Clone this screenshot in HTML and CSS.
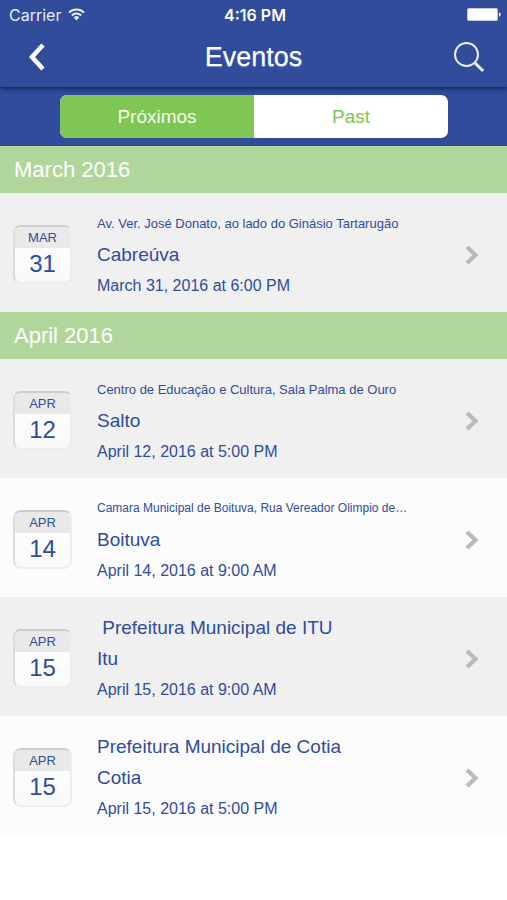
FILE: index.html
```html
<!DOCTYPE html>
<html lang="pt">
<head>
<meta charset="utf-8">
<meta name="viewport" content="width=device-width, initial-scale=1">
<title>Eventos</title>
<link rel="stylesheet" href="styles.css">
</head>
<body>
<svg width="0" height="0" class="defs" aria-hidden="true">
  <symbol id="chevron" viewBox="0 0 14 20"><path d="M2 2l8.500 8L2 18" fill="none" stroke="currentColor" stroke-width="4.200"/></symbol>
</svg>
<header class="top">
  <div class="status">
    <div class="carrier">
      <span>Carrier</span>
      <svg width="17" height="13" viewBox="0 0 17 13" aria-hidden="true">
        <g fill="none" stroke="currentColor" stroke-width="2"><path d="M1 4.600a10.800 10.800 0 0 1 15 0"/><path d="M3.800 7.500a6.800 6.800 0 0 1 9.400 0"/></g>
        <path d="M5.700 9.400a4 4 0 0 1 5.600 0L8.500 12.400z" fill="currentColor"/>
      </svg>
    </div>
    <span class="clock">4:16 PM</span>
    <svg class="battery" width="34" height="13" viewBox="0 0 34 13" aria-hidden="true">
      <rect width="31" height="13" rx="2" fill="#fff" opacity=".7"/><rect x="1" y="1" width="29" height="11" rx="1" fill="#fff"/><path d="M32 4.500c2.300.5 2.300 3.500 0 4z" fill="#fff"/>
    </svg>
  </div>
  <nav class="bar">
    <button class="icon back" type="button" aria-label="Back">
      <svg width="18" height="28" viewBox="0 0 18 28"><path d="M15 2L4 14l11 12" fill="none" stroke="currentColor" stroke-width="4.500"/></svg>
    </button>
    <h1>Eventos</h1>
    <button class="icon search" type="button" aria-label="Search">
      <svg width="32" height="32" viewBox="0 0 32 32" fill="none" stroke="currentColor"><circle cx="13.500" cy="13.500" r="11.500" stroke-width="2"/><path d="M21.700 21.700l8.500 8.300" stroke-width="3"/></svg>
    </button>
  </nav>
</header>
<main>
  <div class="tabs">
    <div class="segment">
      <button type="button" class="active" aria-pressed="true">Próximos</button>
      <button type="button" aria-pressed="false">Past</button>
    </div>
  </div>
  <section>
    <h2>March 2016</h2>
    <ul>
      <li><a class="event" href="#">
        <span class="cal"><span class="month">MAR</span><span class="day">31</span></span>
        <span class="info"><span class="place small">Av. Ver. José Donato, ao lado do Ginásio Tartarugão</span><span class="city">Cabreúva</span><span class="time">March 31, 2016 at 6:00 PM</span></span>
        <svg class="go" width="14" height="20" aria-hidden="true"><use href="#chevron"/></svg>
      </a></li>
    </ul>
  </section>
  <section>
    <h2>April 2016</h2>
    <ul>
      <li><a class="event" href="#">
        <span class="cal"><span class="month">APR</span><span class="day">12</span></span>
        <span class="info"><span class="place small">Centro de Educação e Cultura, Sala Palma de Ouro</span><span class="city">Salto</span><span class="time">April 12, 2016 at 5:00 PM</span></span>
        <svg class="go" width="14" height="20" aria-hidden="true"><use href="#chevron"/></svg>
      </a></li>
      <li><a class="event" href="#">
        <span class="cal"><span class="month">APR</span><span class="day">14</span></span>
        <span class="info"><span class="place tiny">Camara Municipal de Boituva, Rua Vereador Olimpio de…</span><span class="city">Boituva</span><span class="time">April 14, 2016 at 9:00 AM</span></span>
        <svg class="go" width="14" height="20" aria-hidden="true"><use href="#chevron"/></svg>
      </a></li>
      <li><a class="event" href="#">
        <span class="cal"><span class="month">APR</span><span class="day">15</span></span>
        <span class="info"><span class="place">&nbsp;Prefeitura Municipal de ITU</span><span class="city">Itu</span><span class="time">April 15, 2016 at 9:00 AM</span></span>
        <svg class="go" width="14" height="20" aria-hidden="true"><use href="#chevron"/></svg>
      </a></li>
      <li><a class="event" href="#">
        <span class="cal"><span class="month">APR</span><span class="day">15</span></span>
        <span class="info"><span class="place">Prefeitura Municipal de Cotia</span><span class="city">Cotia</span><span class="time">April 15, 2016 at 5:00 PM</span></span>
        <svg class="go" width="14" height="20" aria-hidden="true"><use href="#chevron"/></svg>
      </a></li>
    </ul>
  </section>
</main>
</body>
</html>
```
FILE: styles.css
```css
* { box-sizing: border-box; }
body { margin: 0; background: #fff; color: #304c9c; font-family: "Liberation Sans", Arial, sans-serif; }
button { border: 0; padding: 0; background: none; color: inherit; font: inherit; cursor: pointer; }
svg { display: block; }
.defs { position: absolute; }

.top { position: relative; background: #304c9b; color: #fff; box-shadow: 0 1px 5px rgba(0, 0, 20, .7); }
.status {
  display: grid; grid-template-columns: 1fr auto 1fr; align-items: center;
  height: 29px; padding: 0 6px 0 9px;
  font-family: Inter, sans-serif; font-size: 16px;
}
.carrier { display: flex; align-items: center; gap: 7px; color: #e6ebfa; }
.clock { font-weight: 600; }
.battery { justify-self: end; }
.bar { display: grid; grid-template-columns: 1fr auto 1fr; align-items: center; height: 58px; padding: 0 22px 3px 28px; }
.icon { display: flex; }
.back { justify-self: start; }
.search { justify-self: end; color: #e9eefb; }
h1 { margin: 0 6px 0 0; font-size: 27px; font-weight: 400; line-height: 32px; text-shadow: 0 1px 1px #7f9de0; }

.tabs { padding: 8px 59px 8px 60px; background: #304c9b; }
.segment { display: grid; grid-template-columns: 1fr 1fr; height: 43px; overflow: hidden; border-radius: 7px; background: #fff; color: #7cc653; font-size: 19px; }
.segment .active { background: #7fc655; color: #f3fbea; }

h2 { margin: 0; padding: 0 14px; background: #b0d69c; color: #fff; font-size: 22px; font-weight: 400; line-height: 47px; }
ul { margin: 0; padding: 0; list-style: none; }
li { background: #fcfcfc; }
li:nth-child(odd) { background: #f0f0f0; }
section:last-child li:nth-child(2),
section:last-child li:nth-child(4) { background: #fcfcfc; }

.event {
  display: grid; grid-template-columns: 59px 1fr 14px; column-gap: 25px; align-items: center;
  padding: 15px 28px 11px 13px; color: inherit; text-decoration: none;
}
.cal {
  display: grid; grid-template-rows: 21px 1fr; height: 59px; overflow: hidden;
  border: 2px solid #ededed; border-top-color: #cdcdcd; border-left-color: #dcdcdc;
  border-radius: 8px; background: linear-gradient(#fff, #f9f9f9); text-align: center;
}
.month { background: #e9e9e9; font-size: 13px; line-height: 22px; }
.day { font-size: 24px; line-height: 32px; }
.info { display: grid; grid-auto-rows: 31px; min-width: 0; line-height: 31px; white-space: nowrap; }
.place, .city { font-size: 19px; }
.small { font-size: 13px; }
.tiny { font-size: 12px; }
.time { font-size: 16px; }
.go { color: #bababa; }
```
